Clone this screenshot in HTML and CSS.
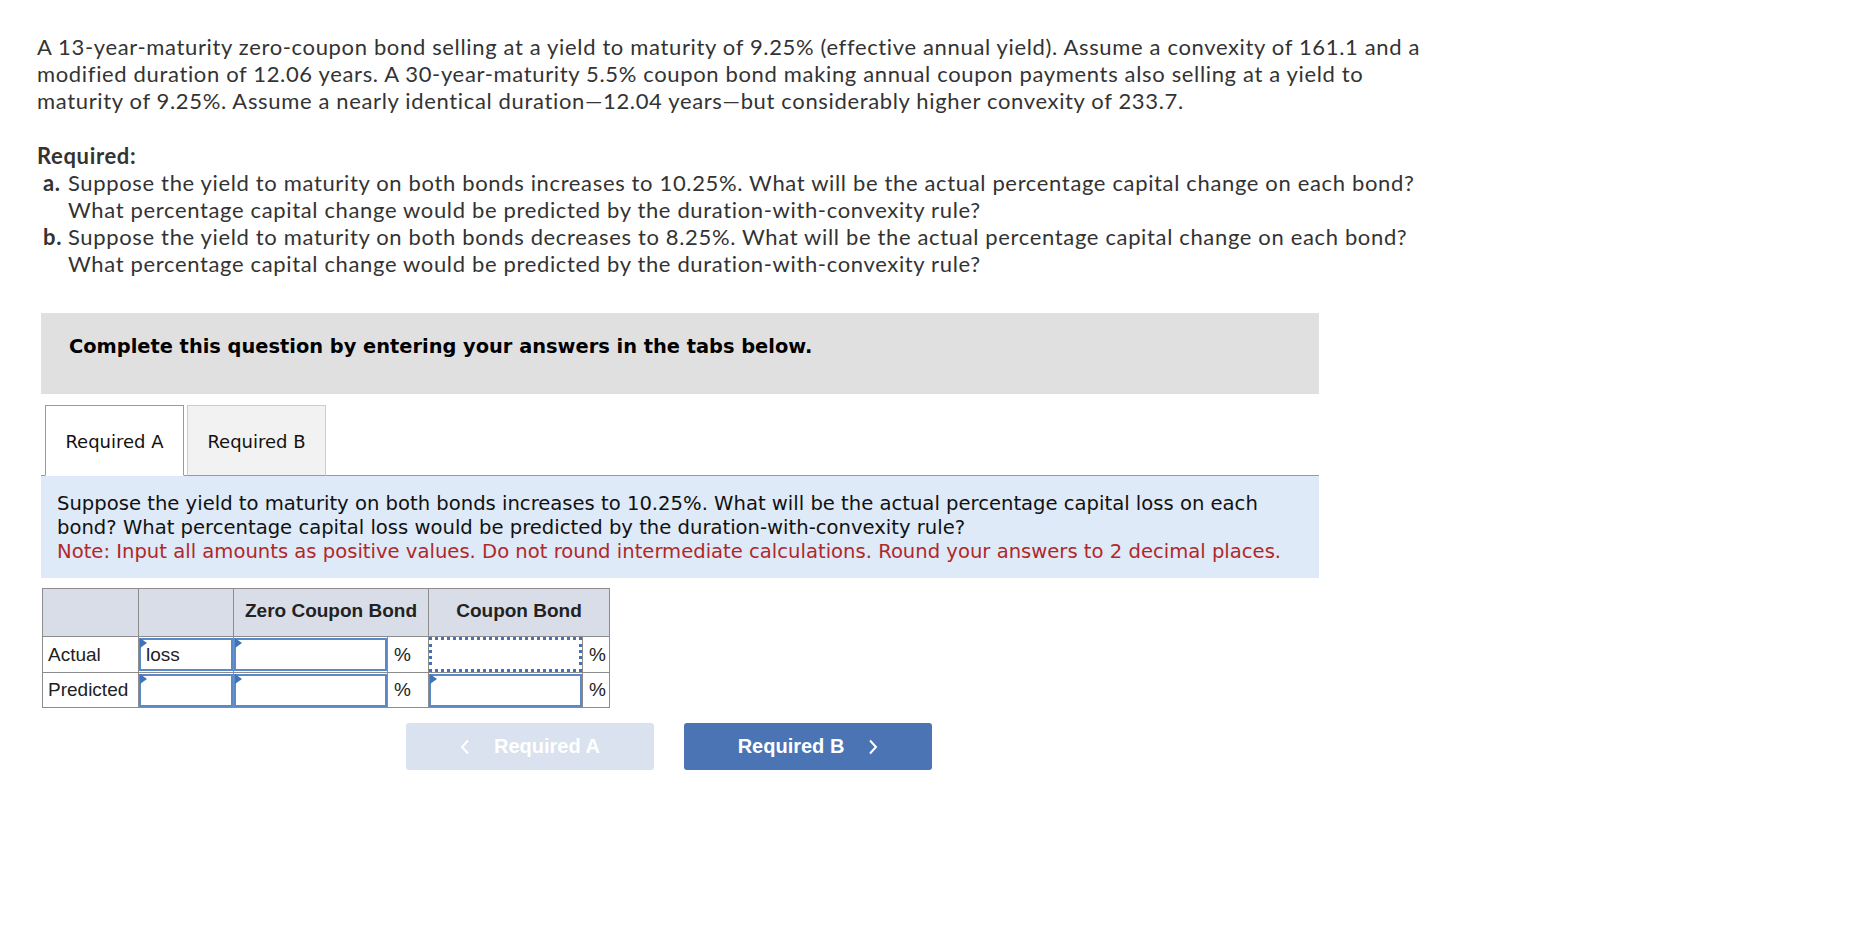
FILE: index.html
```html
<!DOCTYPE html>
<html lang="en">
<head>
<meta charset="utf-8">
<title>Bond convexity question</title>
<link rel="stylesheet" href="styles.css">
</head>
<body>
<main class="page">
  <p class="question">A 13-year-maturity zero-coupon bond selling at a yield to maturity of 9.25% (effective annual yield). Assume a convexity of 161.1 and a modified duration of 12.06 years. A 30-year-maturity 5.5% coupon bond making annual coupon payments also selling at a yield to maturity of 9.25%. Assume a nearly identical duration—12.04 years—but considerably higher convexity of 233.7.</p>
  <h3 class="req-title">Required:</h3>
  <ol class="req-list">
    <li><b class="marker">a.</b><span>Suppose the yield to maturity on both bonds increases to 10.25%. What will be the actual percentage capital change on each bond? What percentage capital change would be predicted by the duration-with-convexity rule?</span></li>
    <li><b class="marker">b.</b><span>Suppose the yield to maturity on both bonds decreases to 8.25%. What will be the actual percentage capital change on each bond? What percentage capital change would be predicted by the duration-with-convexity rule?</span></li>
  </ol>

  <section class="quiz">
    <div class="instructions">Complete this question by entering your answers in the tabs below.</div>
    <div class="tabs">
      <div class="tab tab-active">Required A</div>
      <div class="tab">Required B</div>
    </div>
    <div class="prompt">
      <p>Suppose the yield to maturity on both bonds increases to 10.25%. What will be the actual percentage capital loss on each bond? What percentage capital loss would be predicted by the duration-with-convexity rule?</p>
      <p class="note">Note: Input all amounts as positive values. Do not round intermediate calculations. Round your answers to 2 decimal places.</p>
    </div>

    <table class="answers">
      <colgroup>
        <col class="c-label"><col class="c-kind"><col class="c-input"><col class="c-pct1"><col class="c-input"><col class="c-pct2">
      </colgroup>
      <thead>
        <tr>
          <th></th>
          <th></th>
          <th colspan="2">Zero Coupon Bond</th>
          <th colspan="2">Coupon Bond</th>
        </tr>
      </thead>
      <tbody>
        <tr>
          <td class="label">Actual</td>
          <td class="cell flagged"><input class="field" type="text" value="loss"></td>
          <td class="cell flagged"><input class="field" type="text"></td>
          <td class="pct">%</td>
          <td class="cell"><input class="field field-focus" type="text"></td>
          <td class="pct">%</td>
        </tr>
        <tr>
          <td class="label">Predicted</td>
          <td class="cell flagged"><input class="field" type="text"></td>
          <td class="cell flagged"><input class="field" type="text"></td>
          <td class="pct">%</td>
          <td class="cell flagged"><input class="field" type="text"></td>
          <td class="pct">%</td>
        </tr>
      </tbody>
    </table>

    <div class="nav">
      <button class="nav-btn nav-prev" type="button">
        <svg class="chev" width="10" height="16" viewBox="0 0 10 16"><polyline points="8,1.5 2,8 8,14.5" fill="none" stroke="currentColor" stroke-width="2"/></svg>
        <span>Required A</span>
      </button>
      <button class="nav-btn nav-next" type="button">
        <span>Required B</span>
        <svg class="chev" width="10" height="16" viewBox="0 0 10 16"><polyline points="2,1.5 8,8 2,14.5" fill="none" stroke="currentColor" stroke-width="2"/></svg>
      </button>
    </div>
  </section>
</main>
</body>
</html>
```

FILE: styles.css
```css
* { box-sizing: border-box; }

html, body {
  margin: 0;
  padding: 0;
  background: #ffffff;
}

.page {
  padding: 33px 0 0 37px;
  width: 1436px;
  font-family: "Lato", "Liberation Sans", sans-serif;
  color: #333333;
}

.question {
  margin: 0 0 28px 0;
  font-size: 22px;
  line-height: 27px;
  letter-spacing: 0.65px;
}

.req-title {
  margin: 0;
  font-size: 22px;
  line-height: 27px;
  font-weight: 700;
  letter-spacing: 0.65px;
}

.req-list {
  list-style: none;
  margin: 0;
  padding: 0 0 0 6px;
  font-size: 22px;
  line-height: 27px;
  letter-spacing: 0.65px;
}

.req-list li {
  display: grid;
  grid-template-columns: 25px 1fr;
}

.marker {
  font-weight: 700;
}

.quiz {
  margin: 36px 0 0 4px;
  width: 1278px;
  font-family: "DejaVu Sans", Verdana, sans-serif;
  color: #111111;
}

.instructions {
  background: #e0e0e0;
  height: 81px;
  padding: 23px 0 0 28px;
  font-size: 19.4px;
  line-height: 22px;
  font-weight: 700;
  color: #000000;
}

.tabs {
  display: flex;
  gap: 3px;
  margin-top: 11px;
  padding-left: 4px;
  border-bottom: 1px solid #9a9a9a;
}

.tab {
  width: 139px;
  height: 71px;
  margin-bottom: -1px;
  display: flex;
  align-items: center;
  justify-content: center;
  padding-top: 2px;
  font-size: 18px;
  color: #111111;
  background: #f2f2f2;
  border: 1px solid #cccccc;
  border-bottom-color: #9a9a9a;
}

.tab-active {
  background: #ffffff;
  border-color: #9a9a9a;
  border-bottom-color: #ffffff;
}

.prompt {
  background: #deeaf7;
  padding: 16px 16px 14px 16px;
  font-size: 19.6px;
  line-height: 24px;
}

.prompt p {
  margin: 0;
}

.prompt .note {
  color: #b0282a;
}

.answers {
  margin-top: 10px;
  margin-left: 1px;
  border-collapse: collapse;
  table-layout: fixed;
  width: 567px;
  font-family: "Liberation Sans", Arial, sans-serif;
  font-size: 19px;
  color: #222222;
}

.c-label { width: 96px; }
.c-kind { width: 95px; }
.c-input { width: 154px; }
.c-pct1 { width: 41px; }
.c-pct2 { width: 27px; }

.answers th,
.answers td {
  border: 1px solid #8c8c8c;
  padding: 0;
}

.answers th {
  height: 48px;
  background: #d8dde7;
  font-weight: 700;
  text-align: center;
  vertical-align: middle;
  padding-bottom: 3px;
  white-space: nowrap;
}

.answers td {
  height: 35px;
  vertical-align: middle;
}

.answers td.label {
  padding-left: 5px;
  white-space: nowrap;
}

.answers td.pct {
  padding-left: 6px;
}

.cell {
  position: relative;
}

.field {
  display: block;
  width: 100%;
  height: 33px;
  margin: 0;
  padding: 0 0 0 5px;
  border: 2px solid #5b88c6;
  background: #ffffff;
  font-family: "Liberation Sans", Arial, sans-serif;
  font-size: 19px;
  color: #222222;
  outline: none;
}

.field-focus {
  border: 3px dotted #3f73c0;
  height: 35px;
}

.flagged::before {
  content: "";
  position: absolute;
  left: 1px;
  top: 1px;
  width: 0;
  height: 0;
  border-left: 7px solid #3f73bd;
  border-top: 5px solid transparent;
  border-bottom: 5px solid transparent;
}

.nav {
  display: flex;
  gap: 30px;
  margin: 15px 0 0 365px;
}

.nav-btn {
  width: 248px;
  height: 47px;
  border: none;
  border-radius: 3px;
  display: flex;
  align-items: center;
  justify-content: center;
  gap: 24px;
  font-family: "Liberation Sans", Arial, sans-serif;
  font-size: 20px;
  font-weight: 700;
  color: #ffffff;
  padding: 0;
}

.nav-prev {
  background: #d9e2ee;
}

.nav-next {
  background: #4a74b4;
}

.chev {
  display: block;
}
```
